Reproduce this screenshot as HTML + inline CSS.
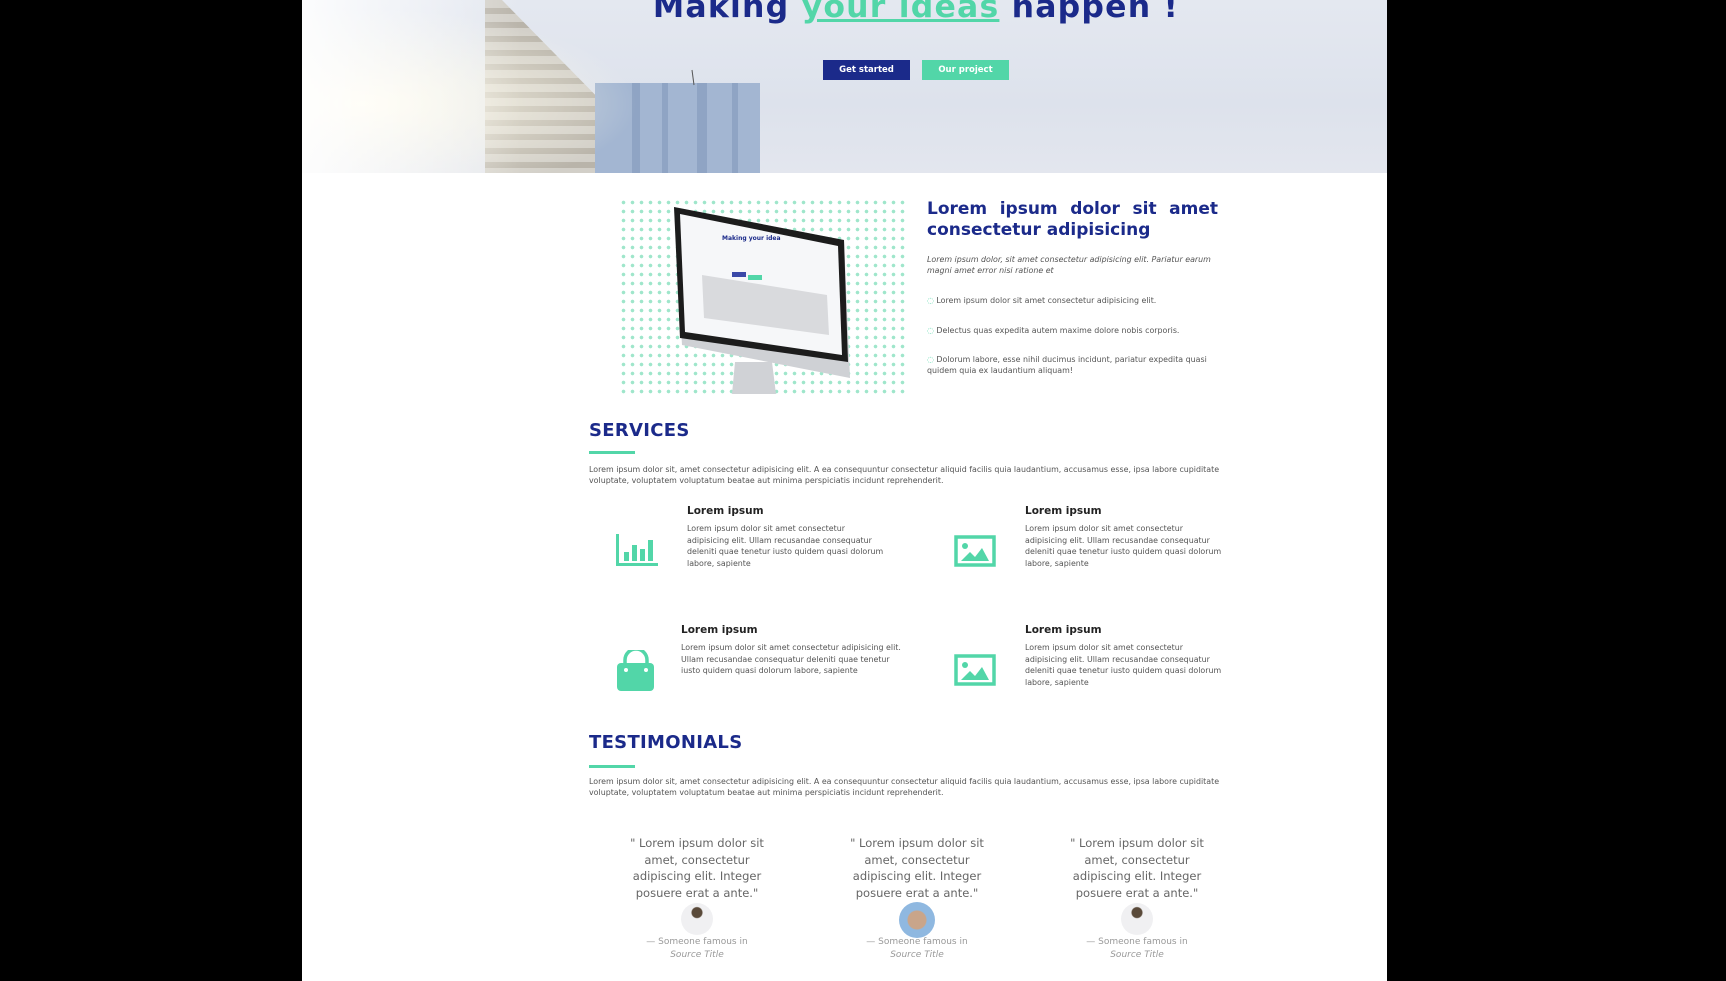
<!DOCTYPE html>
<html><head><meta charset="utf-8"><style>
*{margin:0;padding:0;box-sizing:border-box}
body{width:1726px;height:981px;background:#000;overflow:hidden;font-family:"DejaVu Sans",sans-serif;position:relative}
.page{position:absolute;left:302px;top:0;width:1085px;height:981px;background:#fff;overflow:hidden}
.abs{position:absolute}
.hero{left:0;top:0;width:1085px;height:173px;background:linear-gradient(180deg,#e4e8f0,#dde2ec 60%,#e3e6ee);overflow:hidden}
h1{position:absolute;left:314px;width:600px;text-align:center;top:-11px;font-size:31.5px;color:#1b2a8a;font-weight:bold;letter-spacing:1.2px;font-family:"DejaVu Sans",sans-serif}
h1 u{color:#52d6a8;text-decoration:underline}
.btn{position:absolute;top:60px;width:87px;height:20px;font-size:8.5px;font-weight:bold;color:#fff;text-align:center;line-height:20px}
.navy{color:#1b2a8a}
.t{font-size:7.9px;color:#555;line-height:11px}
.h2{font-size:18px;font-weight:bold;color:#1b2a8a;letter-spacing:.3px}
.ul{width:46px;height:3px;background:#52d6a8}
.st{font-size:10.5px;font-weight:bold;color:#222}
.q{font-size:11.5px;color:#666;line-height:16.5px;text-align:center;width:150px}
.cap{font-size:9px;color:#999;text-align:center;width:130px;line-height:13px}
.av{width:32px;height:32px;border-radius:50%;background:radial-gradient(circle at 50% 30%,#5a4a3a 0 5px,#f0f0f2 6px)}
.sv{width:200px;line-height:11.5px}
</style></head><body>
<div class="page">
<div class="abs hero">
 <svg class="abs" style="left:0;top:0" width="1085" height="173">
  <defs><pattern id="st" width="10" height="14" patternUnits="userSpaceOnUse"><rect width="10" height="14" fill="#d2cfc8"/><rect y="8" width="10" height="6" fill="#b9b4aa"/></pattern>
  <radialGradient id="gl" cx="0.12" cy="0.6" r="0.55"><stop offset="0" stop-color="#fffbea"/><stop offset="1" stop-color="#fffbea" stop-opacity="0"/></radialGradient>
  <linearGradient id="wf" x1="0" x2="1"><stop offset="0" stop-color="#fff" stop-opacity=".9"/><stop offset="1" stop-color="#fff" stop-opacity="0"/></linearGradient></defs>
  <polygon points="183,0 200,0 370,173 183,173" fill="url(#st)"/>
  <rect x="293" y="83" width="165" height="90" fill="#a3b6d2"/>
  <g fill="#8fa4c4"><rect x="330" y="83" width="8" height="90"/><rect x="360" y="83" width="6" height="90"/><rect x="395" y="83" width="10" height="90"/><rect x="430" y="83" width="6" height="90"/></g>
  <line x1="390" y1="70" x2="392" y2="85" stroke="#555" stroke-width="1"/>
  <rect x="0" y="0" width="500" height="173" fill="url(#gl)"/>
  <rect x="0" y="0" width="220" height="173" fill="url(#wf)"/>
 </svg>
 <h1>Making <u>your ideas</u> happen !</h1>
 <div class="btn" style="left:521px;background:#1b2a8a">Get started</div>
 <div class="btn" style="left:620px;background:#52d6a8">Our project</div>
</div>

<div class="abs" style="left:317px;top:198px;width:290px;height:196px;background-image:radial-gradient(#9fe6cb 1.6px,transparent 2px);background-size:9px 9px"></div>
<svg class="abs" style="left:0;top:0" width="700" height="400">
 <polygon points="433,362 470,362 474,394 430,394" fill="#d0d2d6"/>
 <polygon points="372,207 542,240 548,378 380,345" fill="#cfd1d5"/>
 <polygon points="372,207 542,240 546,362 378,338" fill="#1c1c1c"/>
 <polygon points="378,214 536,246 540,355 383,332" fill="#f6f7f9"/>
 <polygon points="400,275 525,295 527,335 402,318" fill="#d9dadd"/>
 <text x="420" y="240" font-size="6" fill="#1b2a8a" font-weight="bold">Making your idea</text>
 <rect x="430" y="272" width="14" height="5" fill="#3b49a8"/><rect x="446" y="275" width="14" height="5" fill="#52d6a8"/>
</svg>

<div class="abs navy" style="left:625px;top:199px;width:291px;font-size:17px;font-weight:bold;line-height:21px;text-align:justify;text-align-last:left">Lorem ipsum dolor sit amet consectetur adipisicing</div>
<div class="abs t" style="left:625px;top:254px;width:295px;font-style:italic">Lorem ipsum dolor, sit amet consectetur adipisicing elit. Pariatur earum magni amet error nisi ratione et</div>
<div class="abs t" style="left:625px;top:295px;width:295px"><span style="color:#52d6a8">◌</span> Lorem ipsum dolor sit amet consectetur adipisicing elit.</div>
<div class="abs t" style="left:625px;top:325px;width:295px"><span style="color:#52d6a8">◌</span> Delectus quas expedita autem maxime dolore nobis corporis.</div>
<div class="abs t" style="left:625px;top:354px;width:295px"><span style="color:#52d6a8">◌</span> Dolorum labore, esse nihil ducimus incidunt, pariatur expedita quasi quidem quia ex laudantium aliquam!</div>

<div class="abs h2" style="left:287px;top:420px">SERVICES</div>
<div class="abs ul" style="left:287px;top:451px"></div>
<div class="abs t" style="left:287px;top:464px;width:645px">Lorem ipsum dolor sit, amet consectetur adipisicing elit. A ea consequuntur consectetur aliquid facilis quia laudantium, accusamus esse, ipsa labore cupiditate voluptate, voluptatem voluptatum beatae aut minima perspiciatis incidunt reprehenderit.</div>

<svg class="abs" style="left:314px;top:534px" width="44" height="34"><g fill="#52d6a8"><rect x="0" y="0" width="3" height="32"/><rect x="0" y="29" width="42" height="3"/><rect x="8" y="18" width="5" height="9"/><rect x="16" y="11" width="5" height="16"/><rect x="24" y="15" width="5" height="12"/><rect x="32" y="6" width="5" height="21"/></g></svg>
<div class="abs st" style="left:385px;top:505px">Lorem ipsum</div>
<div class="abs t sv" style="left:385px;top:523px">Lorem ipsum dolor sit amet consectetur adipisicing elit. Ullam recusandae consequatur deleniti quae tenetur iusto quidem quasi dolorum labore, sapiente</div>

<svg class="abs" style="left:652px;top:535px" width="42" height="32"><rect x="2" y="2" width="38" height="28" fill="none" stroke="#52d6a8" stroke-width="3.5"/><circle cx="11" cy="11" r="3" fill="#52d6a8"/><polygon points="7,26 16,17 21,22 28,13 35,26" fill="#52d6a8"/></svg>
<div class="abs st" style="left:723px;top:505px">Lorem ipsum</div>
<div class="abs t sv" style="left:723px;top:523px">Lorem ipsum dolor sit amet consectetur adipisicing elit. Ullam recusandae consequatur deleniti quae tenetur iusto quidem quasi dolorum labore, sapiente</div>

<svg class="abs" style="left:314px;top:650px" width="40" height="42"><path d="M9,14 V10 a11,11 0 0 1 22,0 V14" fill="none" stroke="#52d6a8" stroke-width="3.5"/><rect x="1" y="13" width="37" height="28" rx="4" fill="#52d6a8"/><circle cx="10" cy="20" r="2" fill="#fff"/><circle cx="30" cy="20" r="2" fill="#fff"/></svg>
<div class="abs st" style="left:379px;top:624px">Lorem ipsum</div>
<div class="abs t sv" style="left:379px;top:642px;width:225px">Lorem ipsum dolor sit amet consectetur adipisicing elit. Ullam recusandae consequatur deleniti quae tenetur iusto quidem quasi dolorum labore, sapiente</div>

<svg class="abs" style="left:652px;top:654px" width="42" height="32"><rect x="2" y="2" width="38" height="28" fill="none" stroke="#52d6a8" stroke-width="3.5"/><circle cx="11" cy="11" r="3" fill="#52d6a8"/><polygon points="7,26 16,17 21,22 28,13 35,26" fill="#52d6a8"/></svg>
<div class="abs st" style="left:723px;top:624px">Lorem ipsum</div>
<div class="abs t sv" style="left:723px;top:642px">Lorem ipsum dolor sit amet consectetur adipisicing elit. Ullam recusandae consequatur deleniti quae tenetur iusto quidem quasi dolorum labore, sapiente</div>

<div class="abs h2" style="left:287px;top:732px">TESTIMONIALS</div>
<div class="abs ul" style="left:287px;top:765px"></div>
<div class="abs t" style="left:287px;top:776px;width:645px">Lorem ipsum dolor sit, amet consectetur adipisicing elit. A ea consequuntur consectetur aliquid facilis quia laudantium, accusamus esse, ipsa labore cupiditate voluptate, voluptatem voluptatum beatae aut minima perspiciatis incidunt reprehenderit.</div>

<div class="abs q" style="left:320px;top:835px">" Lorem ipsum dolor sit amet, consectetur adipiscing elit. Integer posuere erat a ante."</div>
<div class="abs av" style="left:379px;top:903px"></div>
<div class="abs cap" style="left:330px;top:936px">— Someone famous in <i>Source Title</i></div>

<div class="abs q" style="left:540px;top:835px">" Lorem ipsum dolor sit amet, consectetur adipiscing elit. Integer posuere erat a ante."</div>
<div class="abs av" style="left:597px;top:902px;width:36px;height:36px;background:radial-gradient(circle at 50% 50%,#c9a58a 0 9px,#8fb8e0 10px)"></div>
<div class="abs cap" style="left:550px;top:936px">— Someone famous in <i>Source Title</i></div>

<div class="abs q" style="left:760px;top:835px">" Lorem ipsum dolor sit amet, consectetur adipiscing elit. Integer posuere erat a ante."</div>
<div class="abs av" style="left:819px;top:903px"></div>
<div class="abs cap" style="left:770px;top:936px">— Someone famous in <i>Source Title</i></div>
</div>
</body></html>
